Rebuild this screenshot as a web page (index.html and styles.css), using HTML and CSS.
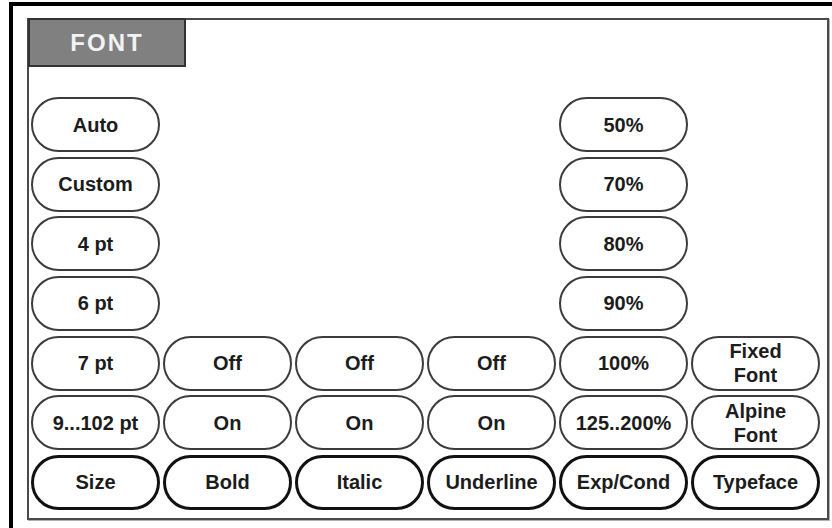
FILE: index.html
```html
<!DOCTYPE html>
<html>
<head>
	<title>Font</title>
	<link rel="stylesheet" href="styles.css">
</head>
<body>
	<div class="bezel">
		<div class="screen">
			<div class="tab">FONT</div>

			<div class="keys">
				<div class="key col-a">Auto</div>
				<div class="key col-e">50%</div>

				<div class="key col-a">Custom</div>
				<div class="key col-e">70%</div>

				<div class="key col-a">4 pt</div>
				<div class="key col-e">80%</div>

				<div class="key col-a">6 pt</div>
				<div class="key col-e">90%</div>

				<div class="key col-a">7 pt</div>
				<div class="key">Off</div>
				<div class="key">Off</div>
				<div class="key">Off</div>
				<div class="key">100%</div>
				<div class="key">Fixed<br>Font</div>

				<div class="key col-a">9...102 pt</div>
				<div class="key">On</div>
				<div class="key">On</div>
				<div class="key">On</div>
				<div class="key">125..200%</div>
				<div class="key">Alpine<br>Font</div>

				<div class="key soft col-a">Size</div>
				<div class="key soft">Bold</div>
				<div class="key soft">Italic</div>
				<div class="key soft">Underline</div>
				<div class="key soft">Exp/Cond</div>
				<div class="key soft">Typeface</div>
			</div>
		</div>
	</div>
</body>
</html>
```

FILE: styles.css
```css
html, body {
	margin: 0;
	background: #fff;
}
body {
	width: 832px;
	height: 528px;
	overflow: hidden;
	font-family: "Liberation Sans", Arial, sans-serif;
}
.bezel {
	margin: 2px 0 0 9px;
	border-top: 4px solid #000;
	border-left: 4px solid #000;
	height: 522px;
}
.screen {
	margin: 12px 0 0 14px;
	width: 796px;
	height: 498px;
	border: 2px solid #4a4a4a;
	box-shadow: 1px 1px 0 #b0b0b0;
	padding: 0 0 0 2px;
}
.tab {
	margin: -2px 0 0 -3px;
	width: 154px;
	height: 45px;
	background: #808080;
	border: 2px solid #333;
	color: #f2f2f2;
	font-weight: bold;
	font-size: 24px;
	letter-spacing: 2px;
	display: flex;
	align-items: center;
	justify-content: center;
}
.keys {
	margin-top: 30px;
	display: grid;
	grid-template-columns: repeat(6, 129px);
	grid-template-rows: repeat(7, 55px);
	column-gap: 3px;
	row-gap: 4.67px;
}
.col-a { grid-column: 1; }
.col-e { grid-column: 5; }
.key {
	box-sizing: border-box;
	border: 2px solid #3c3c3c;
	border-radius: 28px;
	display: flex;
	align-items: center;
	justify-content: center;
	text-align: center;
	font-weight: bold;
	font-size: 20px;
	line-height: 24px;
	color: #1c1c1c;
}
.key.soft {
	border: 3px solid #111;
}
```
